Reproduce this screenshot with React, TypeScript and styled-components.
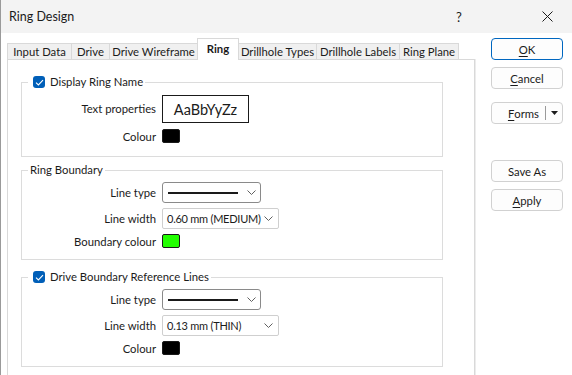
import styled, { createGlobalStyle } from 'styled-components';

const GlobalStyle = createGlobalStyle`
  html, body {
    margin: 0;
    padding: 0;
  }
  body {
    width: 572px;
    height: 375px;
    overflow: hidden;
    background: #ffffff;
    font-family: Lato, "Noto Sans", sans-serif;
    font-size: 11.3px;
    color: #1b1b1b;
  }
`;

const Window = styled.div`
  width: 572px;
  height: 375px;
  display: flex;
  flex-direction: column;
  overflow: hidden;
  box-sizing: border-box;
  border-left: 1px solid #9a9a9a;
  background: #ffffff;
`;

const TitleBar = styled.div`
  height: 33px;
  flex: none;
  display: flex;
  align-items: center;
  background: #f3f3f3;
  padding-left: 8px;
`;

const Title = styled.div`
  font-size: 12.5px;
  flex: 1;
`;

const TitleButton = styled.div<{ $width: number; $right?: number }>`
  width: ${p => p.$width}px;
  margin-right: ${p => p.$right ?? 0}px;
  height: 33px;
  display: flex;
  align-items: center;
  justify-content: center;
  font-size: 13px;
`;

const Body = styled.div`
  flex: 1;
  display: flex;
  padding: 5px 0 0 6px;
`;

const TabArea = styled.div`
  width: 468px;
  display: flex;
  flex-direction: column;
`;

const TabStrip = styled.div`
  height: 22px;
  display: flex;
  align-items: flex-end;
  margin-bottom: -1px;
  position: relative;
  z-index: 1;
`;

const Tab = styled.div<{ $active?: boolean; $w: number }>`
  box-sizing: border-box;
  width: ${p => p.$w}px;
  height: ${p => (p.$active ? 22 : 17)}px;
  padding-bottom: ${p => (p.$active ? 2 : 0)}px;
  margin-left: -1px;
  display: flex;
  align-items: center;
  justify-content: center;
  border: 1px solid #d9d9d9;
  border-bottom: ${p => (p.$active ? 'none' : '1px solid #d9d9d9')};
  background: ${p => (p.$active ? '#ffffff' : '#f0f0f0')};
  font-weight: ${p => (p.$active ? 700 : 400)};
  white-space: nowrap;
  &:first-child {
    margin-left: 0;
  }
`;

const Panel = styled.div`
  height: 340px;
  flex: none;
  border: 1px solid #d9d9d9;
  box-shadow: 1px 0 0 #ececec;
  background: #ffffff;
  padding: 0 31px 0 13px;
`;

const Group = styled.fieldset<{ $top: number; $bottom: number }>`
  margin: ${p => p.$top}px 0 0;
  padding: 5px 0 ${p => p.$bottom}px;
  border: 1px solid #dcdcdc;
  min-width: 0;
`;

const Legend = styled.legend`
  height: 14px;
  line-height: 14px;
  padding: 0 2px;
  margin-left: 6px;
  display: flex;
  align-items: center;
  gap: 5px;
`;

const CheckBox = styled.span`
  width: 12px;
  height: 12px;
  margin-left: 3px;
  border-radius: 3px;
  background: #005fb8;
  display: flex;
  align-items: center;
  justify-content: center;
`;

const Rows = styled.div<{ $gap: number }>`
  display: grid;
  grid-template-columns: 134px auto;
  column-gap: 6px;
  row-gap: ${p => p.$gap}px;
  align-items: center;
  justify-items: start;
`;

const Label = styled.div`
  justify-self: end;
  white-space: nowrap;
`;

const TextPreview = styled.div`
  box-sizing: border-box;
  width: 87px;
  height: 28px;
  margin-top: 1px;
  border: 1px solid #1a1a1a;
  display: flex;
  align-items: center;
  justify-content: center;
  font-size: 14.5px;
`;

const Swatch = styled.div<{ $color: string }>`
  box-sizing: border-box;
  width: 18px;
  height: 14px;
  border-radius: 2px;
  border: 1px solid #1a1a1a;
  background: ${p => p.$color};
`;

const LineCombo = styled.div`
  box-sizing: border-box;
  width: 99px;
  height: 21px;
  border: 1px solid #8a8a8a;
  border-radius: 3px;
  display: flex;
  align-items: center;
  padding: 0 4px 0 5px;
  gap: 9px;
`;

const LineSample = styled.div`
  width: 70px;
  height: 2px;
  background: #1a1a1a;
`;

const WidthSelect = styled.div`
  box-sizing: border-box;
  width: 117px;
  height: 21px;
  border: 1px solid #cfcfcf;
  border-radius: 2px;
  display: flex;
  align-items: center;
  justify-content: space-between;
  padding: 0 5px 0 4px;
  white-space: nowrap;
  font-size: 11px;
  letter-spacing: -0.25px;
`;

const ButtonColumn = styled.div`
  width: 72px;
  margin-left: 16px;
  display: flex;
  flex-direction: column;
`;

const Button = styled.div<{ $gap?: number; $primary?: boolean }>`
  box-sizing: border-box;
  height: 22px;
  margin-top: ${p => p.$gap ?? 0}px;
  border: 1px solid ${p => (p.$primary ? '#0067c0' : '#d1d1d1')};
  border-radius: 4px;
  background: #fdfdfd;
  display: flex;
  align-items: center;
  justify-content: center;
  u {
    text-underline-offset: 2px;
  }
`;

const SplitButton = styled(Button)`
  justify-content: flex-end;
  padding-right: 4px;
`;

const SplitDivider = styled.span`
  width: 1px;
  height: 14px;
  background: #9a9a9a;
  margin: 0 5px 0 6px;
`;

const Chevron = () => (
  <svg width="9" height="5" viewBox="0 0 9 5">
    <polyline points="0.5,0.5 4.5,4.5 8.5,0.5" fill="none" stroke="#606060" strokeWidth="1" />
  </svg>
);

const Check = () => (
  <svg width="9" height="7" viewBox="0 0 9 7">
    <polyline points="1,3.6 3.4,6 8,1.2" fill="none" stroke="#ffffff" strokeWidth="1.1" />
  </svg>
);

const tabs: [string, number][] = [
  ['Input Data', 65],
  ['Drive', 39],
  ['Drive Wireframe', 89],
  ['Ring', 42],
  ['Drillhole Types', 79],
  ['Drillhole Labels', 84],
  ['Ring Plane', 60],
];

function App() {
  return (
    <>
      <GlobalStyle />
      <Window>
        <TitleBar>
          <Title>Ring Design</Title>
          <TitleButton $width={46}>?</TitleButton>
          <TitleButton $width={46} $right={2} style={{ marginLeft: 42 }}>
            <svg width="11" height="11" viewBox="0 0 11 11">
              <path d="M0.5 0.5 L10.5 10.5 M10.5 0.5 L0.5 10.5" stroke="#1b1b1b" strokeWidth="1" />
            </svg>
          </TitleButton>
        </TitleBar>
        <Body>
          <TabArea>
            <TabStrip>
              {tabs.map(([t, w]) => (
                <Tab key={t} $w={w} $active={t === 'Ring'}>{t}</Tab>
              ))}
            </TabStrip>
            <Panel>
              <Group $top={15} $bottom={13}>
                <Legend>
                  <CheckBox><Check /></CheckBox>
                  Display Ring Name
                </Legend>
                <Rows $gap={6}>
                  <Label>Text properties</Label>
                  <TextPreview>AaBbYyZz</TextPreview>
                  <Label>Colour</Label>
                  <Swatch $color="#000000" />
                </Rows>
              </Group>
              <Group $top={6} $bottom={11}>
                <Legend>Ring Boundary</Legend>
                <Rows $gap={5}>
                  <Label>Line type</Label>
                  <LineCombo><LineSample /><Chevron /></LineCombo>
                  <Label>Line width</Label>
                  <WidthSelect>0.60 mm (MEDIUM)<Chevron /></WidthSelect>
                  <Label>Boundary colour</Label>
                  <Swatch $color="#22ff00" />
                </Rows>
              </Group>
              <Group $top={10} $bottom={11}>
                <Legend>
                  <CheckBox><Check /></CheckBox>
                  Drive Boundary Reference Lines
                </Legend>
                <Rows $gap={5}>
                  <Label>Line type</Label>
                  <LineCombo><LineSample /><Chevron /></LineCombo>
                  <Label>Line width</Label>
                  <WidthSelect>0.13 mm (THIN)<Chevron /></WidthSelect>
                  <Label>Colour</Label>
                  <Swatch $color="#000000" />
                </Rows>
              </Group>
            </Panel>
          </TabArea>
          <ButtonColumn>
            <Button $primary><u>O</u>K</Button>
            <Button $gap={7}><u>C</u>ancel</Button>
            <SplitButton $gap={13}>
              <u>F</u>orms
              <SplitDivider />
              <svg width="7" height="4" viewBox="0 0 7 4">
                <polygon points="0,0 7,0 3.5,4" fill="#1b1b1b" />
              </svg>
            </SplitButton>
            <Button $gap={36}>Save As</Button>
            <Button $gap={7}><u>A</u>pply</Button>
          </ButtonColumn>
        </Body>
      </Window>
    </>
  );
}

export default App;
